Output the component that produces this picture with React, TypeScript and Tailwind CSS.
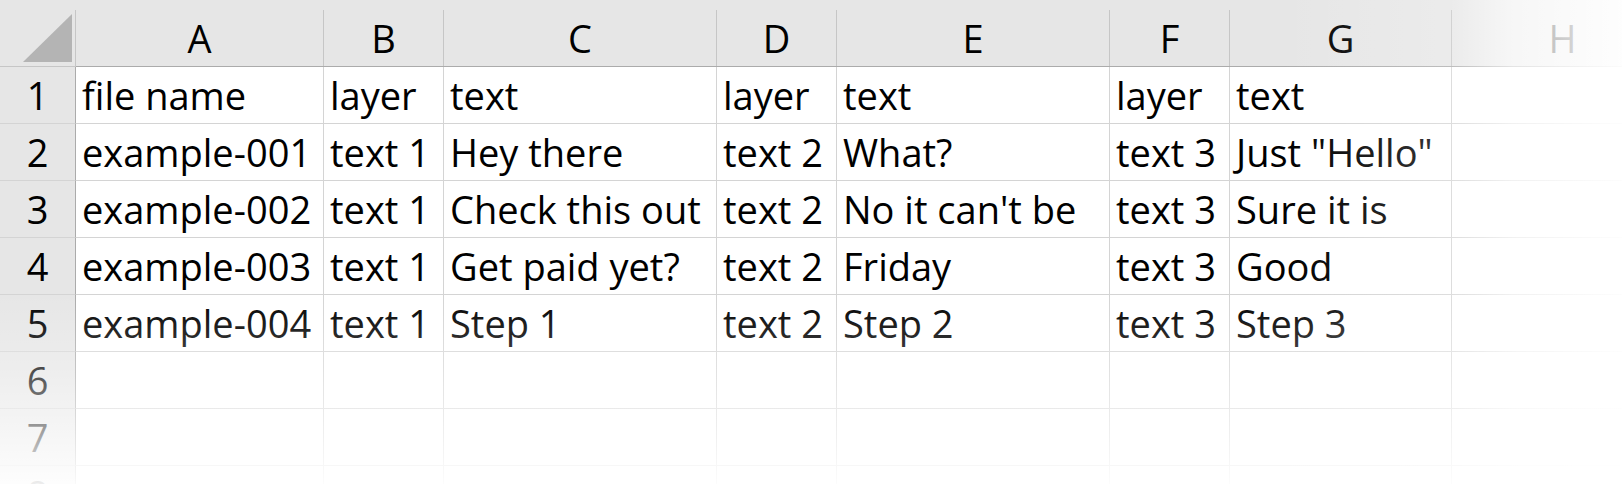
import React from "react";

const columns = ["A", "B", "C", "D", "E", "F", "G", "H"];

const rows: string[][] = [
  ["file name", "layer", "text", "layer", "text", "layer", "text", ""],
  ["example-001", "text 1", "Hey there", "text 2", "What?", "text 3", 'Just "Hello"', ""],
  ["example-002", "text 1", "Check this out", "text 2", "No it can't be", "text 3", "Sure it is", ""],
  ["example-003", "text 1", "Get paid yet?", "text 2", "Friday", "text 3", "Good", ""],
  ["example-004", "text 1", "Step 1", "text 2", "Step 2", "text 3", "Step 3", ""],
  ["", "", "", "", "", "", "", ""],
  ["", "", "", "", "", "", "", ""],
  ["", "", "", "", "", "", "", ""],
];

function CornerCell() {
  return (
    <div className="bg-[#e6e6e6] border-b border-[#c6c6c6] pt-[10px]">
      <div className="h-full border-r border-[#c6c6c6] flex items-end justify-end pr-[3px] pb-[4px]">
        <svg width="49" height="48" viewBox="0 0 49 48">
          <polygon points="49,0 49,48 0,48" fill="#b4b4b4" />
        </svg>
      </div>
    </div>
  );
}

function ColumnHeader({ label }: { label: string }) {
  return (
    <div className="bg-[#e6e6e6] border-b border-[#ababab] pt-[10px]">
      <div className="h-full border-r border-[#c6c6c6] text-center text-[38px] leading-[40px] pt-[8px] text-black">
        {label}
      </div>
    </div>
  );
}

function RowHeader({ n }: { n: number }) {
  return (
    <div className="bg-[#e6e6e6] border-r border-b border-r-[#ababab] border-b-[#d4d4d4] text-center text-[38px] leading-[56px] text-black">
      {n}
    </div>
  );
}

function Cell({ value }: { value: string }) {
  return (
    <div className="bg-white border-r border-b border-[#d4d4d4] pl-[6px] text-[38px] leading-[56px] whitespace-nowrap text-black">
      {value}
    </div>
  );
}

export default function App() {
  return (
    <div className="relative w-[1622px] h-[484px] overflow-hidden bg-white font-['Open_Sans',sans-serif]">
      <div className="grid grid-cols-[76px_248px_120px_273px_120px_273px_120px_222px_222px] grid-rows-[67px_repeat(8,57px)]">
        <CornerCell />
        {columns.map((c) => (
          <ColumnHeader key={c} label={c} />
        ))}
        {rows.map((r, i) => (
          <React.Fragment key={i}>
            <RowHeader n={i + 1} />
            {r.map((v, j) => (
              <Cell key={j} value={v} />
            ))}
          </React.Fragment>
        ))}
      </div>
      {/* sheet edges fade out to white */}
      <div className="pointer-events-none absolute top-0 bottom-0 right-0 w-[340px] bg-[linear-gradient(to_right,rgba(255,255,255,0),rgba(255,255,255,0.22)_50%,rgba(255,255,255,0.68)_68%,rgba(255,255,255,0.95))]" />
      <div className="pointer-events-none absolute left-0 right-0 bottom-0 h-[190px] bg-[linear-gradient(to_bottom,rgba(255,255,255,0),rgba(255,255,255,0.1)_14%,rgba(255,255,255,0.3)_40%,rgba(255,255,255,0.6)_70%,rgba(255,255,255,0.93))]" />
    </div>
  );
}
